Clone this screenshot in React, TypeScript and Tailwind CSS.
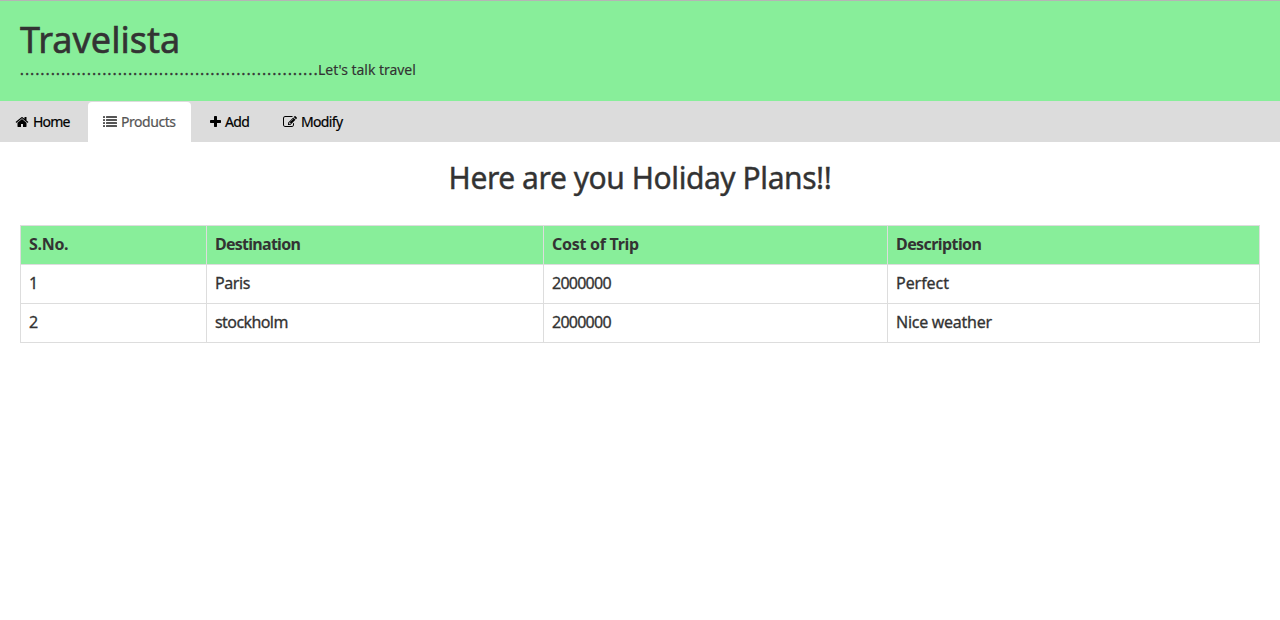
import type { ReactNode } from "react";

function HomeIcon() {
  return (
    <svg className="h-[14px] w-[14px]" viewBox="0 0 1792 1792" fill="currentColor" aria-hidden="true">
      <path d="M1472 992v480q0 26-19 45t-45 19h-384v-384h-256v384h-384q-26 0-45-19t-19-45v-480q0-1 .5-3t.5-3l575-474 575 474q1 2 1 6zm223-69l-62 74q-8 9-21 11h-3q-13 0-21-7l-692-577-692 577q-12 8-24 7-13-2-21-11l-62-74q-8-10-7-23.5t11-21.5l719-599q32-26 76-26t76 26l244 204v-195q0-14 9-23t23-9h192q14 0 23 9t9 23v408l219 182q10 8 11 21.5t-7 23.5z" />
    </svg>
  );
}

function ListIcon() {
  return (
    <svg className="h-[14px] w-[14px]" viewBox="0 0 14 14" fill="currentColor" aria-hidden="true">
      {[1, 4, 7, 10].map((y) => (
        <g key={y}>
          <rect x="0" y={y} width="2" height="2" rx="0.25" />
          <rect x="3" y={y} width="11" height="2" rx="0.25" />
        </g>
      ))}
    </svg>
  );
}

function PlusIcon() {
  return (
    <svg className="h-[14px] w-[11px]" viewBox="192 0 1408 1792" fill="currentColor" aria-hidden="true">
      <path d="M1600 736v192q0 40-28 68t-68 28h-416v416q0 40-28 68t-68 28h-192q-40 0-68-28t-28-68v-416h-416q-40 0-68-28t-28-68v-192q0-40 28-68t68-28h416v-416q0-40 28-68t68-28h192q40 0 68 28t28 68v416h416q40 0 68 28t28 68z" />
    </svg>
  );
}

function EditIcon() {
  return (
    <svg className="h-[14px] w-[14px]" viewBox="0 0 1792 1792" fill="currentColor" aria-hidden="true">
      <path d="M888 1184l116-116-152-152-116 116v56h96v96h56zm440-720q-16-16-33 1l-350 350q-17 17-1 33t33-1l350-350q17-17 1-33zm80 594v190q0 119-84.5 203.5t-203.5 84.5h-832q-119 0-203.5-84.5t-84.5-203.5v-832q0-119 84.5-203.5t203.5-84.5h832q63 0 117 25 15 7 18 23 3 17-9 29l-49 49q-14 14-32 8-23-6-45-6h-832q-66 0-113 47t-47 113v832q0 66 47 113t113 47h832q66 0 113-47t47-113v-126q0-13 9-22l64-64q15-15 35-7t20 29zm-96-738l288 288-672 672h-288v-288zm444 132l-92 92-288-288 92-92q28-28 68-28t68 28l152 152q28 28 28 68t-28 68z" />
    </svg>
  );
}

function Tab({ className, children }: { className: string; children: ReactNode }) {
  return (
    <a href="#" className={`flex items-center ${className}`}>
      {children}
    </a>
  );
}

function Cell({ className, children }: { className?: string; children: ReactNode }) {
  return <td className={`border border-[#ddd] px-2 pb-0.5 ${className ?? ""}`}>{children}</td>;
}

function HeadCell({ className, children }: { className: string; children: ReactNode }) {
  return <th className={`border border-[#ddd] px-2 pb-0.5 font-bold ${className}`}>{children}</th>;
}

const trips = [
  {
    id: 1,
    destination: "Paris",
    cost: "2000000",
    description: "Perfect",
    destinationClass: "tracking-[-0.4px]",
    descriptionClass: "tracking-[-0.05px]",
  },
  {
    id: 2,
    destination: "stockholm",
    cost: "2000000",
    description: "Nice weather",
    destinationClass: "tracking-[-0.58px]",
    descriptionClass: "tracking-[-0.27px]",
  },
];

export default function App() {
  return (
    <div className="min-h-[620px] bg-white font-['Trebuchet_MS','Noto_Sans',sans-serif] text-[#333]">
      <header className="h-[101px] border-t border-[#b5b5b5] bg-[#88ee9a] px-5 pt-[19px]">
        <h1 className="text-[36px] leading-10 whitespace-nowrap [-webkit-text-stroke:0.6px]">Travelista</h1>
        <p className="flex text-[14px] leading-5 whitespace-nowrap">
          <span className="w-[298px] overflow-hidden tracking-[1.4px] [-webkit-text-stroke:0.5px]">
            ..........................................................
          </span>
          <span className="tracking-[-0.03px] [-webkit-text-stroke:0.15px]">Let's talk travel</span>
        </p>
      </header>

      <nav className="flex h-[41px] bg-[#dcdcdc] text-[14px] text-black [-webkit-text-stroke:0.2px]">
        <Tab className="w-[88px] gap-1 pl-[15px]">
          <HomeIcon />
          <span className="tracking-[-0.85px]">Home</span>
        </Tab>
        <Tab className="mt-px h-[41px] w-[103px] gap-1 rounded-t bg-white pb-0.5 pl-[15px] text-[#555]">
          <ListIcon />
          <span className="tracking-[-0.45px]">Products</span>
        </Tab>
        <Tab className="w-[77px] gap-1 pl-[19px]">
          <PlusIcon />
          <span className="tracking-[-0.6px]">Add</span>
        </Tab>
        <Tab className="gap-1 pl-[15px]">
          <EditIcon />
          <span className="tracking-[-0.65px]">Modify</span>
        </Tab>
      </nav>

      <main className="px-5 pt-[19px]">
        <h2 className="text-center text-[30px] leading-[33px] tracking-[-0.43px] whitespace-nowrap [-webkit-text-stroke:0.4px]">
          Here are you Holiday Plans!!
        </h2>
        <table className="mt-[31px] w-full table-fixed border-collapse text-left text-[16px] leading-[22px]">
          <colgroup>
            <col className="w-[186px]" />
            <col className="w-[337px]" />
            <col className="w-[344px]" />
            <col />
          </colgroup>
          <thead className="bg-[#88ee9a]">
            <tr className="h-[39px]">
              <HeadCell className="tracking-[-0.3px]">S.No.</HeadCell>
              <HeadCell className="tracking-[-0.73px]">Destination</HeadCell>
              <HeadCell className="tracking-[-0.28px]">Cost of Trip</HeadCell>
              <HeadCell className="tracking-[-0.58px]">Description</HeadCell>
            </tr>
          </thead>
          <tbody className="[-webkit-text-stroke:0.3px]">
            {trips.map((trip) => (
              <tr key={trip.id} className="h-[39px]">
                <Cell>{trip.id}</Cell>
                <Cell className={trip.destinationClass}>{trip.destination}</Cell>
                <Cell className="tracking-[-0.75px]">{trip.cost}</Cell>
                <Cell className={trip.descriptionClass}>{trip.description}</Cell>
              </tr>
            ))}
          </tbody>
        </table>
      </main>
    </div>
  );
}
